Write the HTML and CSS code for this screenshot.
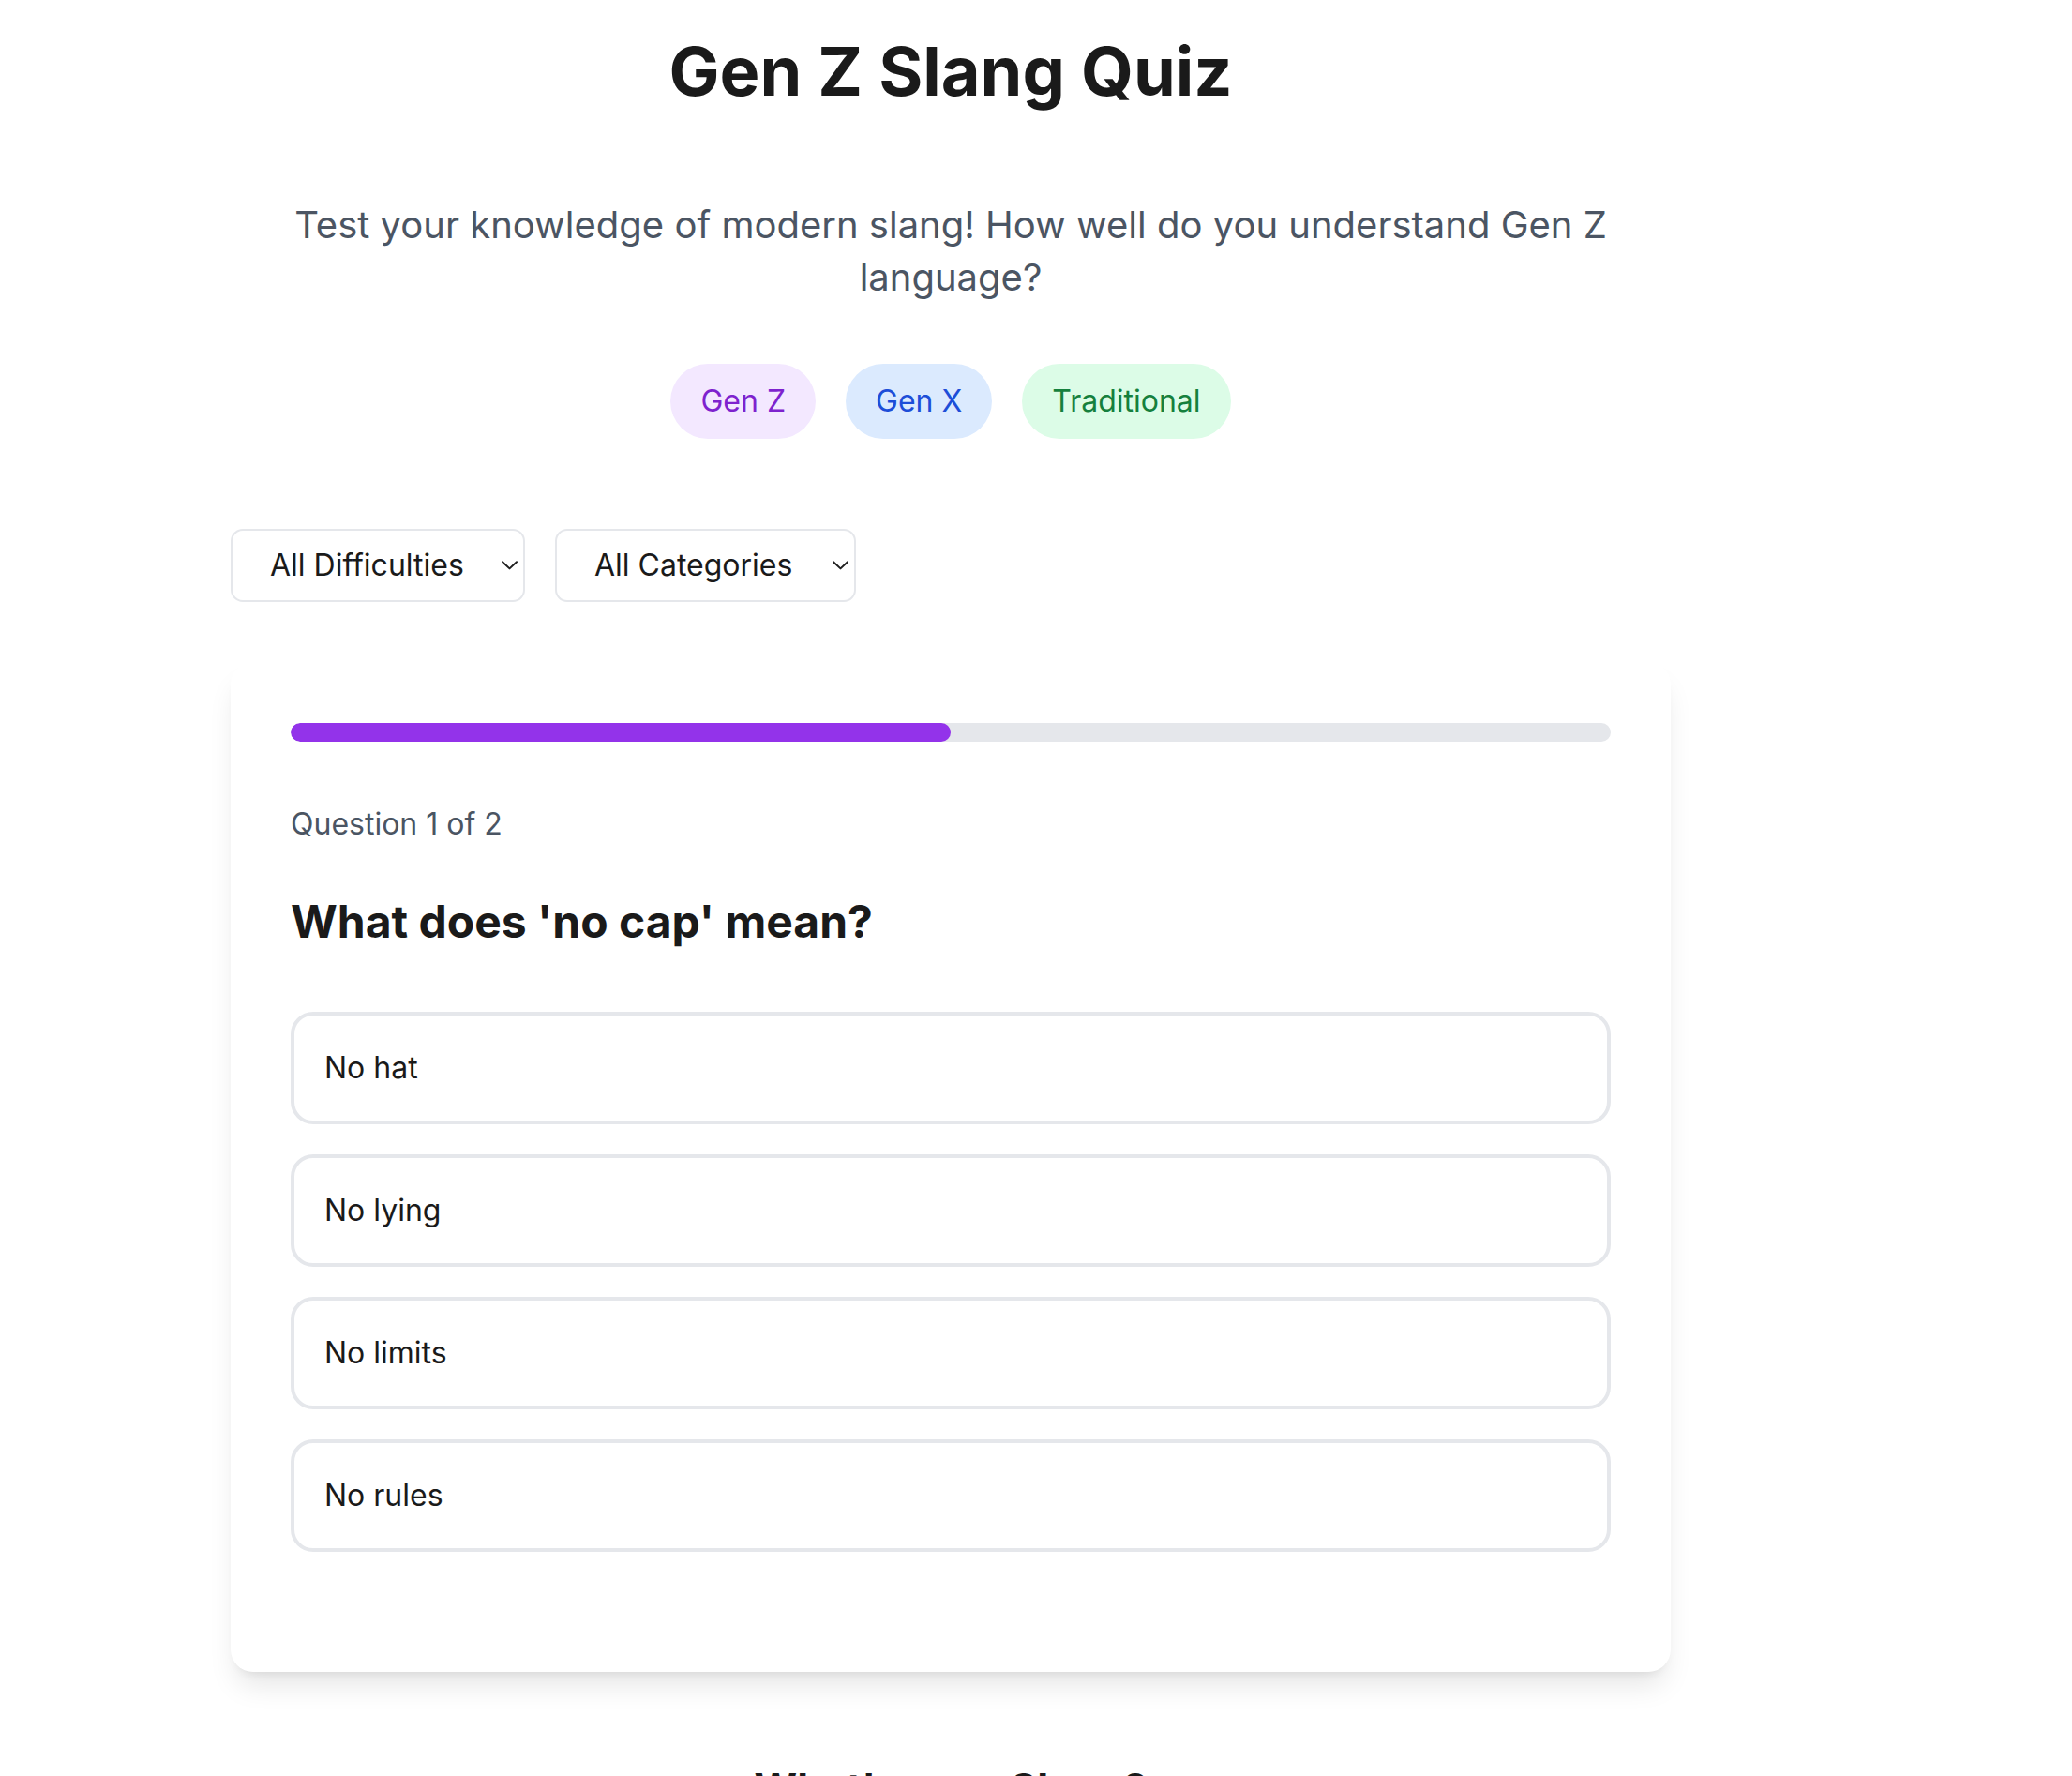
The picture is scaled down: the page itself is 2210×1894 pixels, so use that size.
FILE: index.html
```html
<!DOCTYPE html>
<html lang="en">
<head>
<meta charset="utf-8">
<title>Gen Z Slang Quiz</title>
<link rel="stylesheet" href="styles.css">
</head>
<body>
<div class="page">
  <main class="container">
    <header class="intro">
      <h1 class="title">Gen Z Slang Quiz</h1>
      <p class="subtitle">Test your knowledge of modern slang! How well do you understand Gen Z language?</p>
      <div class="tags">
        <span class="tag tag-genz">Gen Z</span>
        <span class="tag tag-genx">Gen X</span>
        <span class="tag tag-trad">Traditional</span>
      </div>
    </header>

    <div class="filters">
      <div class="select-wrap">
        <select class="select">
          <option>All Difficulties</option>
          <option>Easy</option>
          <option>Medium</option>
          <option>Hard</option>
        </select>
        <svg class="chevron" width="17" height="10" viewBox="0 0 17 10" aria-hidden="true"><path d="M1 1.2 L8.5 8.4 L16 1.2" fill="none" stroke="#1f1f1f" stroke-width="2" stroke-linecap="round" stroke-linejoin="round"/></svg>
      </div>
      <div class="select-wrap">
        <select class="select select-wide">
          <option>All Categories</option>
          <option>Slang</option>
          <option>Phrases</option>
        </select>
        <svg class="chevron" width="17" height="10" viewBox="0 0 17 10" aria-hidden="true"><path d="M1 1.2 L8.5 8.4 L16 1.2" fill="none" stroke="#1f1f1f" stroke-width="2" stroke-linecap="round" stroke-linejoin="round"/></svg>
      </div>
    </div>

    <section class="card">
      <div class="progress"><div class="progress-fill" style="width:50%"></div></div>
      <p class="counter">Question 1 of 2</p>
      <h2 class="question">What does 'no cap' mean?</h2>
      <div class="options">
        <button class="option" type="button">No hat</button>
        <button class="option" type="button">No lying</button>
        <button class="option" type="button">No limits</button>
        <button class="option" type="button">No rules</button>
      </div>
    </section>

    <h2 class="section-title">What's your Slang?</h2>
  </main>
</div>
</body>
</html>
```

FILE: styles.css
```css
* {
  box-sizing: border-box;
}

html, body {
  margin: 0;
  padding: 0;
  background: #ffffff;
}

body {
  font-family: Inter, "Noto Sans", "Liberation Sans", sans-serif;
  color: #1a1a1a;
}

.page {
  padding: 36px 0 0 246px;
}

.container {
  width: 1536px;
}

.intro {
  text-align: center;
}

.title {
  margin: 0;
  font-size: 72px;
  line-height: 80px;
  font-weight: 700;
  color: #1a1a1a;
}

.subtitle {
  margin: 96px 0 0;
  font-size: 40px;
  line-height: 56px;
  color: #4b5563;
}

.tags {
  margin-top: 64px;
  display: flex;
  justify-content: center;
  gap: 32px;
}

.tag {
  display: inline-block;
  padding: 16px 32px;
  border-radius: 9999px;
  font-size: 32px;
  line-height: 48px;
}

.tag-genz {
  background: #f3e8ff;
  color: #7e22ce;
}

.tag-genx {
  background: #dbeafe;
  color: #1d4ed8;
}

.tag-trad {
  background: #dcfce7;
  color: #15803d;
}

.filters {
  margin-top: 96px;
  display: flex;
  gap: 32px;
}

.select-wrap {
  position: relative;
  display: inline-block;
}

.select {
  appearance: none;
  -webkit-appearance: none;
  display: block;
  margin: 0;
  font-family: inherit;
  font-size: 32px;
  line-height: 48px;
  height: 78px;
  padding: 13px 63px 13px 40px;
  border: 2px solid #e5e7eb;
  border-radius: 13px;
  background: #ffffff;
  color: #1a1a1a;
}

.select-wide {
  padding-right: 65px;
}

.chevron {
  position: absolute;
  right: 8px;
  top: 34px;
  pointer-events: none;
}

.card {
  margin-top: 64px;
  padding: 65px 64px 128px;
  background: #ffffff;
  border-radius: 24px;
  box-shadow: 0 20px 30px -6px rgba(0, 0, 0, 0.1), 0 8px 12px -8px rgba(0, 0, 0, 0.1);
}

.progress {
  height: 20px;
  border-radius: 9999px;
  background: #e5e7eb;
  overflow: hidden;
}

.progress-fill {
  height: 100%;
  border-radius: 9999px;
  background: #9333ea;
}

.counter {
  margin: 64px 0 0;
  font-size: 32px;
  line-height: 48px;
  color: #4b5563;
}

.question {
  margin: 48px 0 0;
  font-size: 48px;
  line-height: 64px;
  font-weight: 700;
  color: #1a1a1a;
}

.options {
  margin-top: 64px;
  display: flex;
  flex-direction: column;
  gap: 32px;
}

.option {
  display: block;
  width: 100%;
  margin: 0;
  padding: 32px 32px;
  text-align: left;
  font-family: inherit;
  font-size: 32px;
  line-height: 48px;
  color: #1a1a1a;
  background: #ffffff;
  border: 4px solid #e5e7eb;
  border-radius: 24px;
  cursor: pointer;
}

.section-title {
  margin: 92px 0 0;
  text-align: center;
  font-size: 44px;
  line-height: 64px;
  font-weight: 700;
  color: #1a1a1a;
}
```
